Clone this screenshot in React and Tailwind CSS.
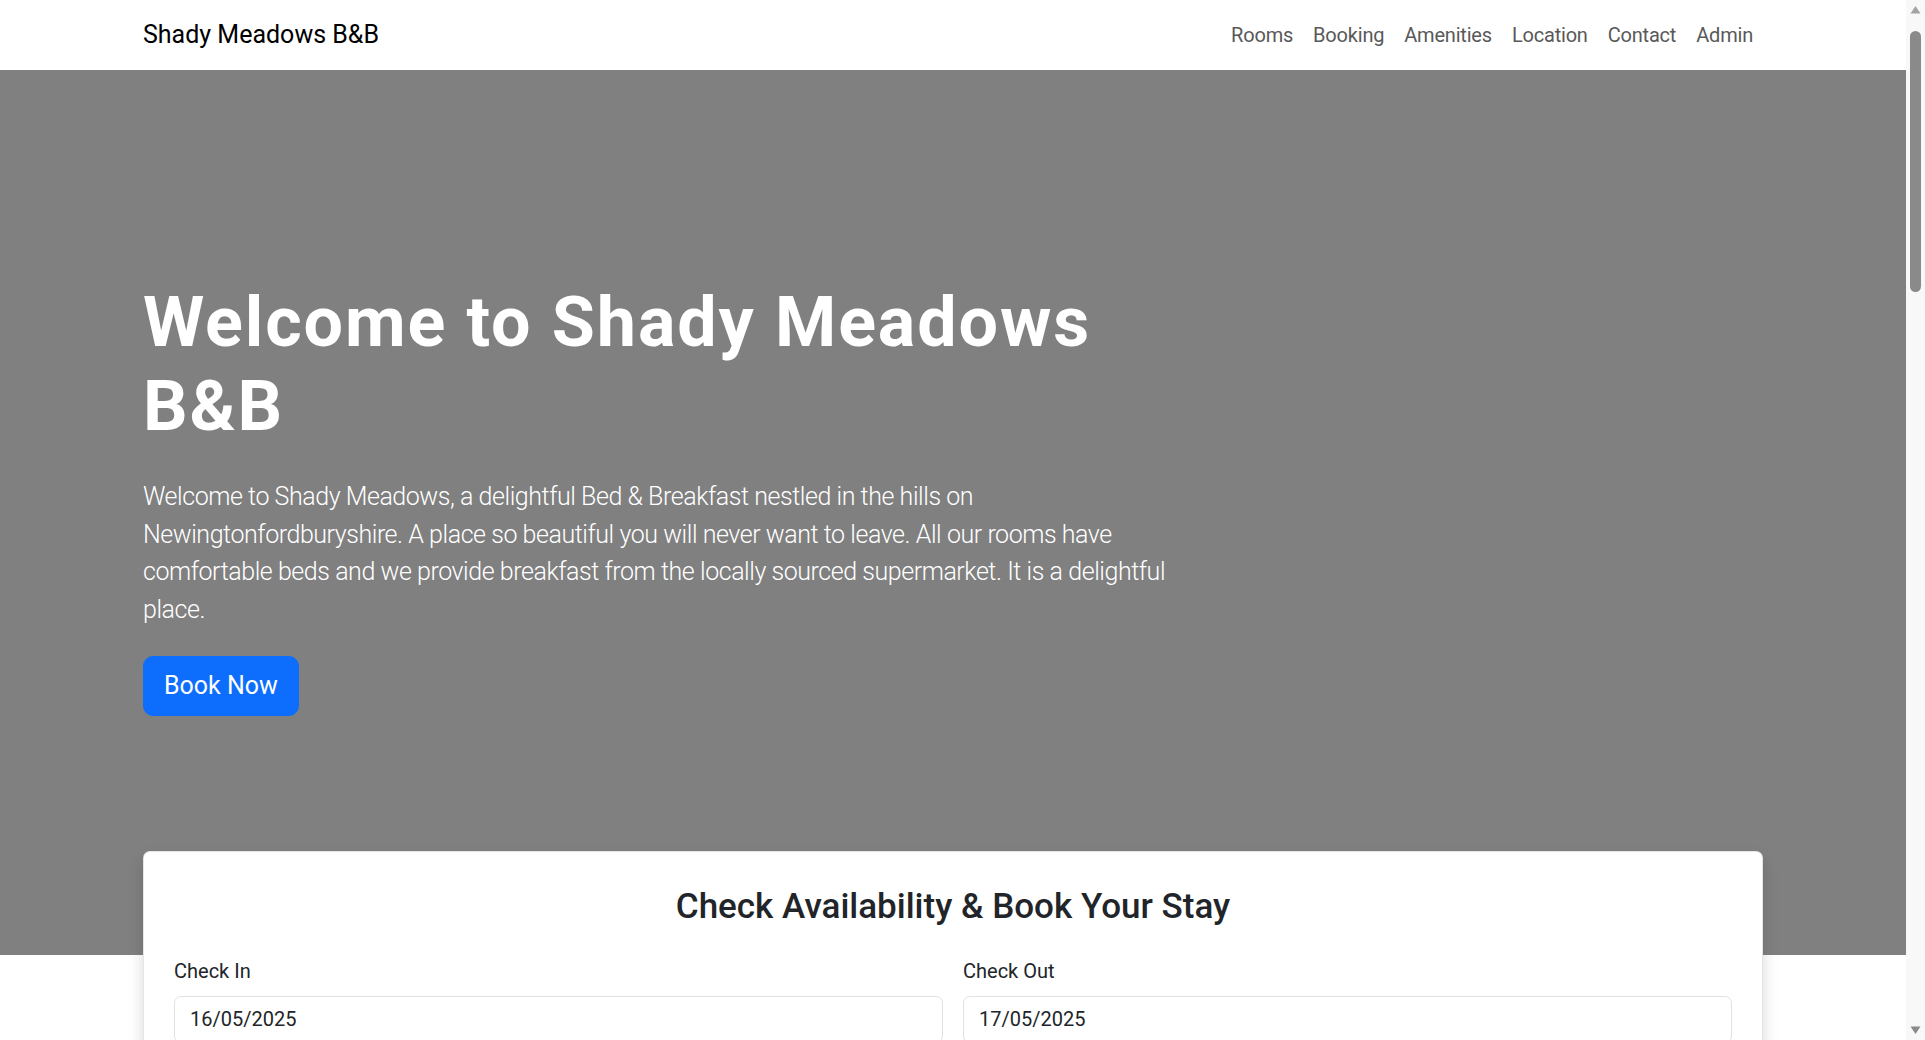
export default function App() {
  const links = ['Rooms', 'Booking', 'Amenities', 'Location', 'Contact', 'Admin'];
  return (
    <div className="flex h-[1040px] overflow-hidden bg-white font-['Roboto',sans-serif] text-[#212529]">
      <main className="min-w-0 flex-1 overflow-hidden">
        <nav className="h-[70px] bg-white">
          <div className="mx-auto flex h-full w-[1620px] items-center justify-between">
            <a href="#" className="text-[25px] text-black">Shady Meadows B&amp;B</a>
            <ul className="flex">
              {links.map((l) => (
                <li key={l}>
                  <a href="#" className="block px-[10px] text-[20px] tracking-[-0.01em] text-[#595959]">
                    {l}
                  </a>
                </li>
              ))}
            </ul>
          </div>
        </nav>

        <section className="bg-[#808080]">
          <div className="mx-auto w-[1620px] pt-[210px] pb-[239px]">
            <div className="w-[1070px] text-white">
              <h1 className="mb-[30px] text-[70px] font-bold leading-[84px] tracking-[0.027em]">
                Welcome to Shady Meadows B&amp;B
              </h1>
              <p className="mb-[28px] text-[25px] font-light leading-[37.5px] tracking-[-0.018em]">
                Welcome to Shady Meadows, a delightful Bed &amp; Breakfast nestled in the hills on
                Newingtonfordburyshire. A place so beautiful you will never want to leave. All our
                rooms have comfortable beds and we provide breakfast from the locally sourced
                supermarket. It is a delightful place.
              </p>
              <button className="rounded-[10px] border border-[#0d6efd] bg-[#0d6efd] px-[20px] py-[10px] text-[25px] leading-[37.5px] text-white">
                Book Now
              </button>
            </div>
          </div>
        </section>

        <div className="mx-auto -mt-[104px] w-[1620px]">
          <div className="rounded-[7px] border border-black/10 bg-white p-[30px] shadow-[0_0.5rem_1rem_rgba(0,0,0,0.15)]">
            <h3 className="mt-[4px] mb-[28px] text-center text-[35px] font-medium leading-[42px]">
              Check Availability &amp; Book Your Stay
            </h3>
            <div className="grid grid-cols-2 gap-x-[20px]">
              <div>
                <label className="mb-[10px] block text-[20px] leading-[30px]">Check In</label>
                <input
                  defaultValue="16/05/2025"
                  className="block h-[47px] w-full rounded-[7px] border border-[#dee2e6] px-[15px] text-[20px] text-[#212529] outline-none"
                />
              </div>
              <div>
                <label className="mb-[10px] block text-[20px] leading-[30px]">Check Out</label>
                <input
                  defaultValue="17/05/2025"
                  className="block h-[47px] w-full rounded-[7px] border border-[#dee2e6] px-[15px] text-[20px] text-[#212529] outline-none"
                />
              </div>
            </div>
            <div className="mt-[30px]">
              <button className="w-full rounded-[7px] bg-[#0d6efd] py-[10px] text-[20px] text-white">
                Check Availability
              </button>
            </div>
          </div>
        </div>
      </main>

      <aside className="flex w-[19px] shrink-0 flex-col items-center bg-[#f8f8f8] py-[5px]">
        <svg width="11" height="9" viewBox="0 0 11 9" className="shrink-0">
          <path d="M5.5 1 L10.5 8.5 L0.5 8.5 Z" fill="#a3a3a3" />
        </svg>
        <div className="mt-[17px] h-[261px] w-[11px] shrink-0 rounded-full bg-[#8a8a8a]" />
        <div className="flex-1" />
        <svg width="11" height="9" viewBox="0 0 11 9" className="shrink-0">
          <path d="M0.5 0.5 L10.5 0.5 L5.5 8 Z" fill="#8a8a8a" />
        </svg>
      </aside>
    </div>
  );
}
